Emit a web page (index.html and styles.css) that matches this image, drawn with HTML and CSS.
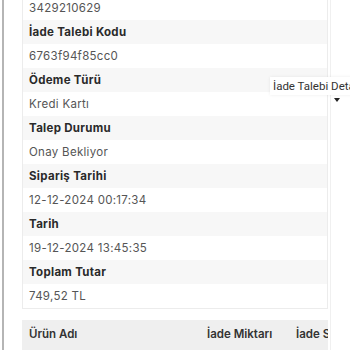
FILE: index.html
```html
<!DOCTYPE html>
<html lang="tr">
<head>
<meta charset="utf-8">
<link rel="stylesheet" href="styles.css">
</head>
<body>
<div class="page">
  <div class="rail"></div>
  <div class="content">
    <div class="card">
      <div class="row value">3429210629</div>
      <div class="row label">İade Talebi Kodu</div>
      <div class="row value">6763f94f85cc0</div>
      <div class="row label">Ödeme Türü</div>
      <div class="row value">Kredi Kartı</div>
      <div class="row label">Talep Durumu</div>
      <div class="row value">Onay Bekliyor</div>
      <div class="row label">Sipariş Tarihi</div>
      <div class="row value">12-12-2024 00:17:34</div>
      <div class="row label">Tarih</div>
      <div class="row value">19-12-2024 13:45:35</div>
      <div class="row label">Toplam Tutar</div>
      <div class="row value">749,52 TL</div>
    </div>
    <div class="thead">
      <div class="th th-name">Ürün Adı</div>
      <div class="th th-qty">İade Miktarı</div>
      <div class="th th-status">İade S</div>
    </div>
  </div>
  <div class="tooltip">İade Talebi Detay</div>
  <div class="caret"></div>
</div>
</body>
</html>
```

FILE: styles.css
```css
html, body {
  margin: 0;
  padding: 0;
  background: #fff;
  overflow: hidden;
}
.page {
  position: relative;
  width: 350px;
  height: 350px;
  display: flex;
  font-family: "Inter", "Noto Sans", sans-serif;
  overflow: hidden;
}
.rail {
  width: 2px;
  margin-left: 2px;
  background: #b5b5b5;
  flex: none;
}
.content {
  margin-left: 18px;
  width: 306px;
  flex: none;
  border-right: 1px solid #f0f0f0;
  padding-right: 2px;
}
.card {
  margin-top: -4px;
  display: flex;
  flex-direction: column;
  border-left: 1px solid #ececec;
  border-right: 1px solid #ececec;
  border-bottom: 1px solid #ececec;
}
.row {
  height: 24px;
  box-sizing: border-box;
  display: flex;
  align-items: center;
  padding-left: 6px;
  font-size: 11.5px;
  letter-spacing: 0.3px;
}
.value {
  background: #fff;
  color: #555;
  font-weight: 400;
}
.label {
  background: #f7f7f7;
  color: #2a2a2a;
  font-weight: 700;
}
.thead {
  margin-top: 11px;
  height: 40px;
  background: #efefef;
  display: flex;
  align-items: flex-start;
  padding-top: 7px;
  box-sizing: border-box;
  font-size: 11.5px;
  font-weight: 600;
  color: #333;
  white-space: nowrap;
  overflow: hidden;
}
.th-name {
  padding-left: 7px;
  width: 178px;
  flex: none;
}
.th-qty {
  width: 89px;
  flex: none;
}
.th-status {
  flex: none;
}
.tooltip {
  position: absolute;
  left: 270px;
  top: 77px;
  height: 18px;
  padding: 0 3px;
  background: #fff;
  box-shadow: 0 0 3px rgba(0,0,0,0.08);
  font-family: "Roboto", sans-serif;
  font-size: 11.5px;
  color: #333;
  line-height: 18px;
  white-space: nowrap;
}
.caret {
  position: absolute;
  left: 334px;
  top: 98px;
  width: 0;
  height: 0;
  border-left: 3.5px solid transparent;
  border-right: 3.5px solid transparent;
  border-top: 4px solid #222;
}
```
